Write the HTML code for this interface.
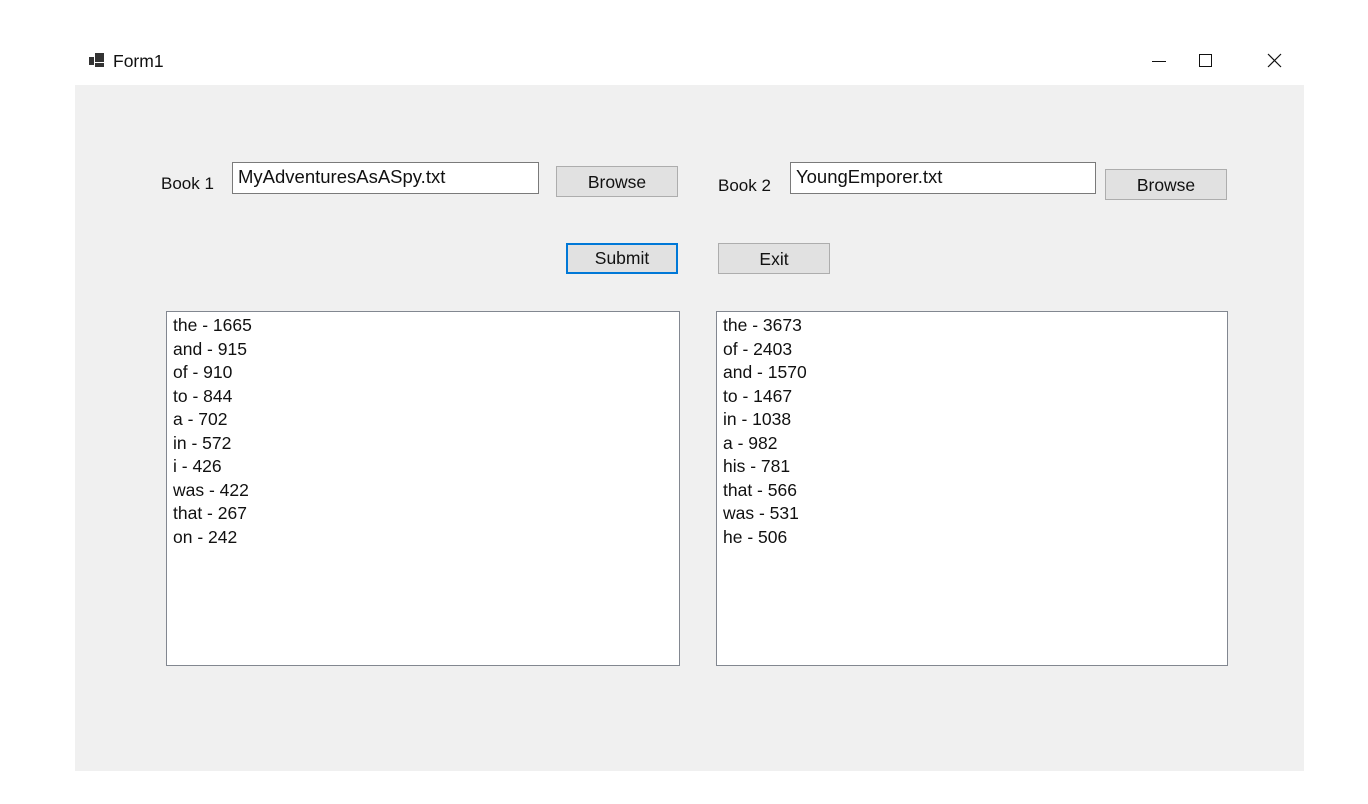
<!DOCTYPE html>
<html><head><style>
body{margin:0;width:1368px;height:804px;background:#fff;font-family:"Liberation Sans",sans-serif;position:relative;overflow:hidden;color:#111}
.a{position:absolute}
.client{left:75px;top:85px;width:1229px;height:686px;background:#f0f0f0}
.tb{background:#fff;border:1px solid #7a7a7a;box-sizing:border-box;font-size:18.5px;line-height:22px;padding:3px 0 0 5px;white-space:nowrap;overflow:hidden}
.btn{background:#e1e1e1;border:1px solid #adadad;box-sizing:border-box;font-size:17.5px;text-align:center;line-height:31px}
.lb{background:#fff;border:1px solid #828790;box-sizing:border-box;font-size:17.5px;line-height:23.5px;padding:2px 0 0 6px}
.lbl{font-size:17px}
</style></head><body>
<div class="a" style="left:89px;top:57px;width:5px;height:8px;background:#333"></div>
<div class="a" style="left:95px;top:53px;width:9px;height:9px;background:#333"></div>
<div class="a" style="left:95px;top:63px;width:9px;height:4px;background:#333"></div>
<div class="a" style="left:113px;top:51px;font-size:17.5px">Form1</div>
<div class="a" style="left:1152px;top:61px;width:14px;height:1px;background:#111"></div>
<div class="a" style="left:1199px;top:54px;width:13px;height:13px;border:1px solid #111;box-sizing:border-box"></div>
<svg class="a" style="left:1267px;top:53px" width="15" height="15"><path d="M1 1L14 14M14 1L1 14" stroke="#111" stroke-width="1.2"/></svg>
<div class="a client"></div>
<div class="a lbl" style="left:161px;top:174px">Book 1</div>
<div class="a tb" style="left:232px;top:162px;width:307px;height:32px">MyAdventuresAsASpy.txt</div>
<div class="a btn" style="left:556px;top:166px;width:122px;height:31px">Browse</div>
<div class="a lbl" style="left:718px;top:176px">Book 2</div>
<div class="a tb" style="left:790px;top:162px;width:306px;height:32px">YoungEmporer.txt</div>
<div class="a btn" style="left:1105px;top:169px;width:122px;height:31px">Browse</div>
<div class="a btn" style="left:566px;top:243px;width:112px;height:31px;border:2px solid #0078d7;line-height:27px">Submit</div>
<div class="a btn" style="left:718px;top:243px;width:112px;height:31px">Exit</div>
<div class="a lb" style="left:166px;top:311px;width:514px;height:355px">the - 1665<br>and - 915<br>of - 910<br>to - 844<br>a - 702<br>in - 572<br>i - 426<br>was - 422<br>that - 267<br>on - 242</div>
<div class="a lb" style="left:716px;top:311px;width:512px;height:355px">the - 3673<br>of - 2403<br>and - 1570<br>to - 1467<br>in - 1038<br>a - 982<br>his - 781<br>that - 566<br>was - 531<br>he - 506</div>
</body></html>
